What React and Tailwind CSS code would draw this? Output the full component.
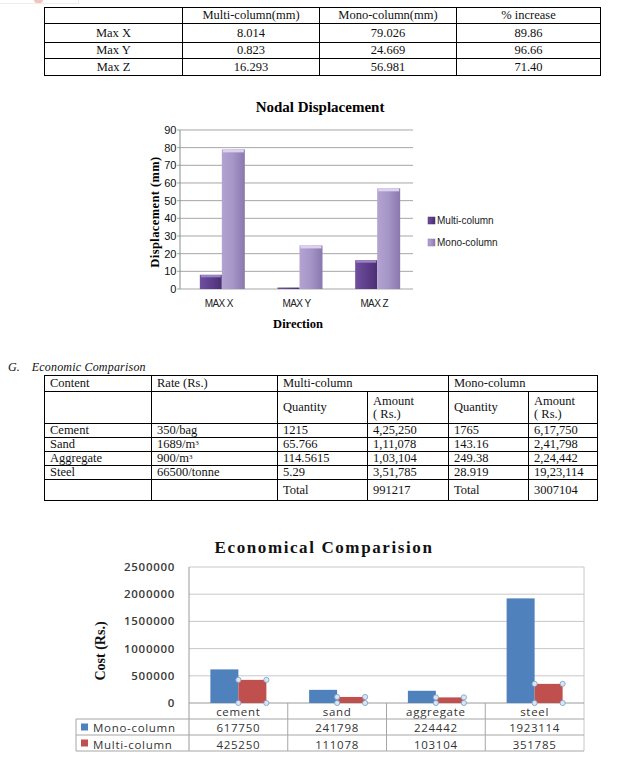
const serif = { fontFamily: '"Liberation Serif", "Times New Roman", serif' };

const topRows = [
  ["Max X", "8.014", "79.026", "89.86", "h-[19px]"],
  ["Max Y", "0.823", "24.669", "96.66", "h-[16px]"],
  ["Max Z", "16.293", "56.981", "71.40", "h-[17px]"],
];

const costRows = [
  ["Cement", "350/bag", "1215", "4,25,250", "1765", "6,17,750"],
  ["Sand", "1689/m", "65.766", "1,11,078", "143.16", "2,41,798"],
  ["Aggregate", "900/m", "114.5615", "1,03,104", "249.38", "2,24,442"],
  ["Steel", "66500/tonne", "5.29", "3,51,785", "28.919", "19,23,114"],
];

function TopTable() {
  return (
    <table className="ml-[44px] mt-[3px] border-collapse text-[12.5px] leading-none text-[#111]" style={serif}>
      <colgroup>
        <col className="w-[138px]" />
        <col className="w-[137px]" />
        <col className="w-[137px]" />
        <col className="w-[144px]" />
      </colgroup>
      <tbody>
        <tr className="h-[16px]">
          <td className="border border-black"></td>
          <td className="border border-black text-center">Multi-column(mm)</td>
          <td className="border border-black text-center">Mono-column(mm)</td>
          <td className="border border-black text-center">% increase</td>
        </tr>
        {topRows.map((r) => (
          <tr key={r[0]} className={r[4]}>
            {r.slice(0, 4).map((c, i) => (
              <td key={i} className="border border-black text-center">{c}</td>
            ))}
          </tr>
        ))}
      </tbody>
    </table>
  );
}

function NodalChart() {
  const y0 = 198;
  const step = 17.67 / 10;
  const cats = [
    ["MAX X", 8.014, 79.026],
    ["MAX Y", 0.823, 24.669],
    ["MAX Z", 16.293, 56.981],
  ];
  const left = 50;
  const right = 283;
  const cw = (right - left) / 3;
  const sans = '"Liberation Sans", Arial, sans-serif';
  const tnr = '"Liberation Serif", "Times New Roman", serif';
  return (
    <svg width="390" height="245" className="ml-[130px] mt-[15px] block">
      <defs>
        <linearGradient id="mul" x1="0" x2="1" y1="0" y2="0">
          <stop offset="0" stopColor="#6f4f9e" />
          <stop offset="0.5" stopColor="#5e3f8c" />
          <stop offset="1" stopColor="#4a2f72" />
        </linearGradient>
        <linearGradient id="mon" x1="0" x2="1" y1="0" y2="0">
          <stop offset="0" stopColor="#b3a3d2" />
          <stop offset="0.5" stopColor="#a594c6" />
          <stop offset="1" stopColor="#8a78ad" />
        </linearGradient>
      </defs>
      <text x="190" y="21" textAnchor="middle" fontFamily={tnr} fontWeight="bold" fontSize="15">
        Nodal Displacement
      </text>
      {[0, 10, 20, 30, 40, 50, 60, 70, 80, 90].map((v) => {
        const y = y0 - v * step;
        return (
          <g key={v}>
            <line x1={left - 3} x2={right} y1={y} y2={y} stroke="#a6a6a6" strokeWidth="1" />
            <text x={left - 4} y={y + 4} textAnchor="end" fontFamily={sans} fontSize="11" letterSpacing="-0.3" fill="#111">
              {v}
            </text>
          </g>
        );
      })}
      <line x1={left} x2={left} y1={y0 - 90 * step} y2={y0} stroke="#8c8c8c" />
      {cats.map((c, i) => {
        const cx = left + cw * i + cw / 2 + 3;
        const hm = c[1] * step;
        const ho = c[2] * step;
        return (
          <g key={c[0]}>
            <rect x={cx - 22} y={y0 - hm} width="22" height={hm} fill="url(#mul)" />
            {hm > 4 && <rect x={cx - 21} y={y0 - hm} width="20" height="2.5" fill="#9a82c4" />}
            <rect x={cx} y={y0 - ho} width="23" height={ho} fill="url(#mon)" />
            <rect x={cx + 1} y={y0 - ho} width="21" height="3" fill="#ddd2ee" />
            <text x={cx - 3} y="216" textAnchor="middle" fontFamily={sans} fontSize="10" letterSpacing="-0.6" fill="#222">
              {c[0]}
            </text>
          </g>
        );
      })}
      <text x="168" y="237" textAnchor="middle" fontFamily={tnr} fontWeight="bold" fontSize="12.5">
        Direction
      </text>
      <text
        transform="translate(29 121) rotate(-90)"
        textAnchor="middle"
        fontFamily={tnr}
        fontWeight="bold"
        fontSize="12.5"
        letterSpacing="0.4"
      >
        Displacement (mm)
      </text>
      <rect x="298" y="126" width="7" height="7" fill="url(#mul)" stroke="#4a2f72" strokeWidth="0.5" />
      <text x="307" y="133" fontFamily={sans} fontSize="10" fill="#222">Multi-column</text>
      <rect x="298" y="148" width="7" height="7" fill="url(#mon)" stroke="#8a78ad" strokeWidth="0.5" />
      <text x="307" y="155" fontFamily={sans} fontSize="10" fill="#222">Mono-column</text>
    </svg>
  );
}

function CostTable() {
  const cell = "border border-black px-[5px] text-left align-middle";
  return (
    <table className="ml-[44px] mt-px border-collapse text-[12.5px] leading-[13px] text-[#111]" style={serif}>
      <colgroup>
        <col className="w-[107px]" />
        <col className="w-[126px]" />
        <col className="w-[90px]" />
        <col className="w-[81px]" />
        <col className="w-[80px]" />
        <col className="w-[69px]" />
      </colgroup>
      <tbody>
        <tr className="h-[16px]">
          <td className={cell}>Content</td>
          <td className={cell}>Rate (Rs.)</td>
          <td className={cell} colSpan={2}>Multi-column</td>
          <td className={cell} colSpan={2}>Mono-column</td>
        </tr>
        <tr className="h-[32px]">
          <td className={cell}></td>
          <td className={cell}></td>
          <td className={cell}>Quantity</td>
          <td className={cell}>Amount<br />( Rs.)</td>
          <td className={cell}>Quantity</td>
          <td className={cell}>Amount<br />( Rs.)</td>
        </tr>
        {costRows.map((r, ri) => (
          <tr key={r[0]} className="h-[14px]">
            {r.map((c, i) => (
              <td key={i} className={cell}>
                {c}
                {i === 1 && (ri === 1 || ri === 2) && <sup className="text-[7px]">3</sup>}
              </td>
            ))}
          </tr>
        ))}
        <tr className="h-[21px]">
          <td className={cell}></td>
          <td className={cell}></td>
          <td className={cell}>Total</td>
          <td className={cell}>991217</td>
          <td className={cell}>Total</td>
          <td className={cell}>3007104</td>
        </tr>
      </tbody>
    </table>
  );
}

function CostChart() {
  const y0 = 173;
  const per = 27.2 / 500000;
  const left = 129;
  const right = 524;
  const cw = (right - left) / 4;
  const cats = [
    ["cement", 617750, 425250],
    ["sand", 241798, 111078],
    ["aggregate", 224442, 103104],
    ["steel", 1923114, 351785],
  ];
  const sans = '"Open Sans", "Liberation Sans", sans-serif';
  const tnr = '"Liberation Serif", "Times New Roman", serif';
  const handle = (x, y, k) => (
    <circle key={k} cx={x} cy={y} r="2.6" fill="#dbe6f3" stroke="#7b9cc6" strokeWidth="0.8" />
  );
  return (
    <svg width="540" height="232" className="ml-[60px] mt-[29px] block">
      <text x="264" y="23" textAnchor="middle" fontFamily={tnr} fontWeight="bold" fontSize="17" letterSpacing="1.6" fill="#111">
        Economical Comparision
      </text>
      {[0, 500000, 1000000, 1500000, 2000000, 2500000].map((v) => {
        const y = y0 - v * per;
        return (
          <g key={v}>
            {v > 0 && <line x1={left} x2={right} y1={y} y2={y} stroke="#c8c8c8" />}
            <text x="115" y={y + 4} textAnchor="end" fontFamily={sans} fontWeight="600" fontSize="11.5" letterSpacing="0.7" fill="#3a3a3a">
              {v}
            </text>
          </g>
        );
      })}
      <line x1={right} x2={right} y1={y0 - 2500000 * per} y2={y0 + 48} stroke="#c8c8c8" />
      <line x1={left} x2={left} y1={y0 - 2500000 * per} y2={y0 + 48} stroke="#9a9a9a" />
      <line x1={left} x2={right} y1={y0} y2={y0} stroke="#9a9a9a" />
      {cats.map((c, i) => {
        const cx = left + cw * i + cw / 2;
        const hb = c[1] * per;
        const hr = c[2] * per;
        return (
          <g key={c[0]}>
            <rect x={cx - 28} y={y0 - hb} width="28" height={hb} fill="#4f81bd" />
            <rect x={cx} y={y0 - hr} width="28" height={hr} fill="#c0504d" />
            {handle(cx, y0 - hr, "a")}
            {handle(cx + 28, y0 - hr, "b")}
            {handle(cx, y0, "c")}
            {handle(cx + 28, y0, "d")}
            {i > 0 && <line x1={left + cw * i} x2={left + cw * i} y1={y0} y2={y0 + 48} stroke="#a6a6a6" />}
            <text x={cx} y={y0 + 12.5} textAnchor="middle" fontFamily={sans} fontSize="11.5" letterSpacing="0.7" fill="#333">
              {c[0]}
            </text>
            <text x={cx} y={y0 + 29} textAnchor="middle" fontFamily={sans} fontSize="11.5" letterSpacing="0.7" fill="#333">
              {c[1]}
            </text>
            <text x={cx} y={y0 + 45.5} textAnchor="middle" fontFamily={sans} fontSize="11.5" letterSpacing="0.7" fill="#333">
              {c[2]}
            </text>
          </g>
        );
      })}
      <line x1="16" x2={right} y1={y0 + 16} y2={y0 + 16} stroke="#a6a6a6" />
      <line x1="16" x2={right} y1={y0 + 32} y2={y0 + 32} stroke="#a6a6a6" />
      <line x1="16" x2={right} y1={y0 + 48} y2={y0 + 48} stroke="#a6a6a6" />
      <line x1="16" x2="16" y1={y0 + 16} y2={y0 + 48} stroke="#a6a6a6" />
      <rect x="21" y={y0 + 20.5} width="7" height="7" fill="#4f81bd" />
      <text x="33" y={y0 + 29} fontFamily={sans} fontSize="11.5" letterSpacing="0.7" fill="#333">Mono-column</text>
      <rect x="21" y={y0 + 36.5} width="7" height="7" fill="#c0504d" />
      <text x="33" y={y0 + 45.5} fontFamily={sans} fontSize="11.5" letterSpacing="0.7" fill="#333">Multi-column</text>
      <text
        transform="translate(45 121) rotate(-90)"
        textAnchor="middle"
        fontFamily={tnr}
        fontWeight="bold"
        fontSize="14"
        fill="#111"
      >
        Cost (Rs.)
      </text>
    </svg>
  );
}

export default function App() {
  return (
    <div className="w-[639px] h-[762px] overflow-hidden bg-white">
      <div className="h-[4px] w-[79px] border-b border-r border-[#eee] flex">
        <div className="ml-[34px] h-[3px] w-[9px] rounded-b-full bg-[#f3c4bd]"></div>
      </div>
      <TopTable />
      <NodalChart />
      <div className="ml-[8px] mt-[24px] flex h-[14px] items-center text-[12px] italic leading-none text-[#111]" style={serif}>
        <span>G.</span>
        <span className="ml-[12px] tracking-[0.2px]">Economic Comparison</span>
      </div>
      <CostTable />
      <CostChart />
    </div>
  );
}
